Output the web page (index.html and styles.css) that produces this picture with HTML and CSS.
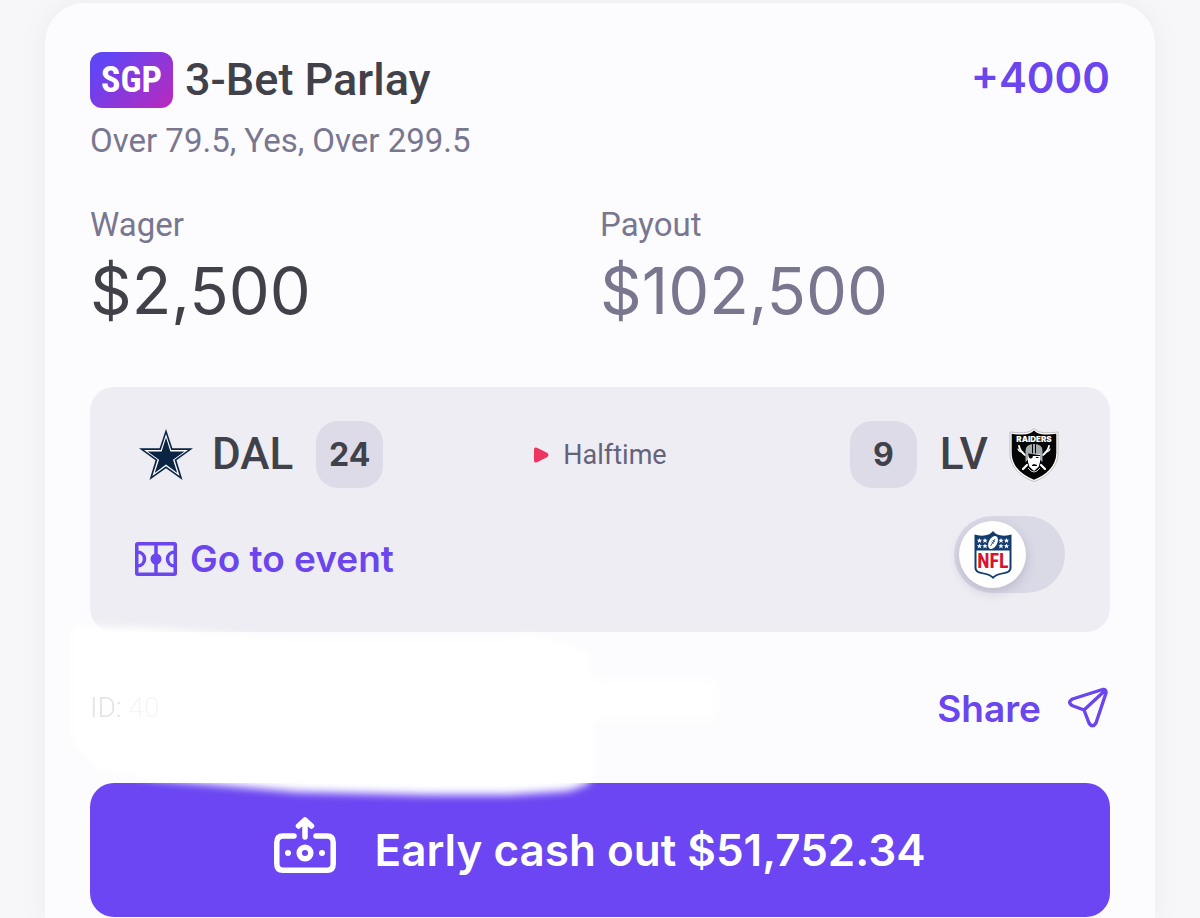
FILE: index.html
```html
<!DOCTYPE html>
<html lang="en">
<head>
  <meta charset="UTF-8">
  <meta name="viewport" content="width=device-width, initial-scale=1">
  <title>3-Bet Parlay</title>
  <link rel="stylesheet" href="styles.css">
</head>
<body>
  <main class="bet-card">
    <header class="bet-header">
      <span class="sgp">SGP</span>
      <h1>3-Bet Parlay</h1>
      <span class="odds">+4000</span>
    </header>
    <p class="picks">Over 79.5, Yes, Over 299.5</p>

    <dl class="amounts">
      <div>
        <dt>Wager</dt>
        <dd>$2,500</dd>
      </div>
      <div class="payout">
        <dt>Payout</dt>
        <dd>$102,500</dd>
      </div>
    </dl>

    <section class="game">
      <div class="match">
        <div class="team">
          <svg class="team-logo" viewBox="0 0 62 62" aria-hidden="true">
            <path fill="#0b2444" d="M31 5L37.4 24.3H58L41.5 36.3L47.5 56L31 44.2L14.5 56L20.5 36.3L4 24.3H24.6Z"/>
            <path fill="#fff" d="M31 10L36.2 26H53L39.5 35.8L44.6 52L31 42.2L17.4 52L22.5 35.8L9 26H25.8Z"/>
            <path fill="#0b2444" d="M31 13.500L35.400 27.500H49.500L38 35.700L42.300 49L31 40.600L19.700 49L24 35.700L12.500 27.500H26.600Z"/>
          </svg>
          <span class="team-name">DAL</span>
          <span class="score">24</span>
        </div>
        <div class="status">
          <svg class="live" viewBox="0 0 16 16" aria-hidden="true">
            <path fill="#ee3560" d="M1 2.5Q1 -.5 4 .8L14 5.8Q17 8 14 10.200L4 15.200Q1 16.500 1 13.500Z"/>
          </svg>
          <span>Halftime</span>
        </div>
        <div class="team away">
          <span class="score">9</span>
          <span class="team-name">LV</span>
          <svg class="team-logo" viewBox="0 0 62 62" aria-hidden="true">
            <path fill="#fff" stroke="#999" stroke-width=".6" d="M31 4.500Q34 8.500 41 8.800Q48 9 55 8V29C55 43 44 53 31 57.500C18 53 7 43 7 29V8Q14 9 21 8.800Q28 8.500 31 4.500Z"/>
            <path fill="#050505" d="M31 6.500Q35 10.300 42 10.500Q48 10.700 53.300 9.800V29C53.300 42 43 51.300 31 55.700C19 51.300 8.700 42 8.700 29V9.800Q14 10.700 20 10.500Q27 10.300 31 6.500Z"/>
            <text x="31" y="18.2" text-anchor="middle" class="raiders-text">RAIDERS</text>
            <g fill="none" stroke="#fff" stroke-width="1.8" stroke-linecap="round">
              <path d="M16 22Q17 27 22 31M46 22Q45 27 40 31"/>
              <path d="M15 25Q16 28 20 28M47 25Q46 28 42 28" stroke-width="1.2"/>
              <path d="M24 41L20 45M38 41L42 45" stroke-width="2.2"/>
            </g>
            <path fill="#a5acaf" d="M22.500 38V27Q22.500 20 31 20T39.500 27V38L37 36V30H25V36Z"/>
            <path fill="#050505" d="M29 20.300h1v9h-1zM32 20.300h1v9h-1z"/>
            <path fill="#fff" d="M25 30H37V38L35.500 43L31 47L26.500 43L25 38Z"/>
            <path fill="#050505" d="M25 29.500L37 31V32L30 32Q29.500 35 27.500 34.500T25.500 32ZM33 33h2.500v1H33zM29 41l2-1 3 1v1h-5z"/>
            <path fill="none" stroke="#ccc" d="M25 44Q31 52 37 44"/>
          </svg>
        </div>
      </div>

      <div class="game-actions">
        <a class="event-link" href="#event">
          <svg class="event-icon" viewBox="0 0 42 34" aria-hidden="true">
            <g fill="none" stroke="currentColor" stroke-width="3.5">
              <rect x="1.75" y="1.75" width="38.5" height="30.5" rx="1"/>
              <path d="M21 2V32M2 10C12 10 12 24 2 24M40 10C30 10 30 24 40 24"/>
            </g>
            <circle cx="21" cy="17" r="5.5" fill="currentColor"/>
          </svg>
          Go to event
        </a>
        <label class="league">
          <input type="checkbox" aria-label="NFL">
          <span class="knob">
            <svg class="nfl-logo" viewBox="0 0 40 50" aria-hidden="true">
              <path fill="#123c70" d="M20 1Q23 5 29 5.500Q34 6 38.500 4.500V38Q38.500 43 31 44Q23 45 20 49Q17 45 9 44Q1.500 43 1.500 38V4.500Q6 6 11 5.500Q17 5 20 1Z"/>
              <path fill="#fff" d="M3.500 20.500H36.500V38Q36.500 41.500 30 42.500Q23 43.500 20 46.500Q17 43.500 10 42.500Q3.500 41.500 3.500 38Z"/>
              <g fill="#fff">
                <path id="star" d="M6.500 8l.8 1.800h1.900l-1.500 1.200 .6 1.900-1.800-1.200-1.800 1.200 .6-1.900-1.500-1.200h1.900z"/>
                <use href="#star" x="5.5"/>
                <use href="#star" x="21.5"/>
                <use href="#star" x="27"/>
                <use href="#star" y="5.5"/>
                <use href="#star" x="5.5" y="5.5"/>
                <use href="#star" x="21.5" y="5.5"/>
                <use href="#star" x="27" y="5.5"/>
                <ellipse cx="20" cy="12.5" rx="4.200" ry="7" transform="rotate(28 20 12.5)"/>
              </g>
              <path d="M17.500 16L22 9M18.500 12l2.500 1.500M19.500 10.300l2.500 1.500" stroke="#123c70" stroke-width=".8"/>
              <text x="20" y="38" text-anchor="middle" class="nfl-text">NFL</text>
            </svg>
          </span>
        </label>
      </div>
    </section>

    <footer class="bet-footer">
      <!-- soft cover that hides the bet number -->
      <svg class="cover" viewBox="0 0 680 200" aria-hidden="true">
        <defs>
          <filter id="soft" x="-10%" y="-10%" width="120%" height="120%">
            <feGaussianBlur stdDeviation="4"/>
          </filter>
        </defs>
        <g fill="#fff" filter="url(#soft)">
          <path d="M14 14L90 16L230 28H450Q475 18 500 30L532 40L537 155L530 172L510 179L450 183H370L240 180L170 174L100 168L40 158L14 130Z"/>
          <rect x="530" y="65" width="132" height="45" rx="12" opacity=".8"/>
        </g>
      </svg>
      <span class="bet-id">ID: <span class="faded">40</span></span>
      <button type="button" class="share">
        Share
        <svg class="share-icon" viewBox="0 0 42 42" aria-hidden="true">
          <path fill="none" stroke="currentColor" stroke-width="3.4" stroke-linejoin="round" stroke-linecap="round" d="M34.500 2.500L4.500 12Q-1 15 4 18.500L16 23L21 36Q24.500 41.500 28 36L38 6Q38.500 2 34.500 2.500ZM16 23L36.500 4"/>
        </svg>
      </button>
    </footer>

    <button type="button" class="cash-out">
      <svg class="cash-icon" viewBox="0 0 62 56" aria-hidden="true">
        <g fill="none" stroke="currentColor" stroke-width="5.5" stroke-linecap="round" stroke-linejoin="round">
          <path d="M20 19H9Q2.800 19 2.800 25.500V47Q2.800 53.200 9 53.200H53Q59.200 53.200 59.200 47V25.500Q59.200 19 53 19H42"/>
          <path d="M31 20V4M24.500 9L31 3L37.500 9"/>
          <circle cx="31" cy="36" r="5.8"/>
        </g>
        <g fill="currentColor">
          <circle cx="14" cy="36" r="3"/>
          <circle cx="48" cy="36" r="3"/>
        </g>
      </svg>
      Early cash out $51,752.34
    </button>
  </main>
</body>
</html>
```
FILE: styles.css
```css
* {
  box-sizing: border-box;
}

body {
  margin: 0;
  padding: 3px 45px 0;
  background-color: #f7f7f9;
  color: #414149;
  font-family: Inter, Roboto, sans-serif;
  overflow: hidden;
}

h1, p, dl, dd {
  margin: 0;
}

button {
  border: none;
  background: none;
  padding: 0;
  font-family: inherit;
  cursor: pointer;
}

.bet-card {
  padding: 49px 45px 1px;
  background-color: #fcfcfe;
  border-radius: 40px 40px 0 0;
  box-shadow: 0 0 30px rgba(40, 40, 60, 0.05);
}

.bet-header {
  display: flex;
  align-items: center;
  gap: 12px;
  height: 56px;
}

.sgp {
  width: 83px;
  border-radius: 12px;
  background: linear-gradient(135deg, #6145f5 15%, #b62abf 95%);
  color: #fff;
  font: bold 36px/56px "Liberation Sans Narrow", "Roboto Condensed", Roboto, sans-serif;
  text-align: center;
}

h1 {
  font: 500 45px/56px Roboto, sans-serif;
}

.odds {
  margin-left: auto;
  padding-bottom: 6px;
  color: #6b46ee;
  font-size: 42px;
  font-weight: 600;
}

.picks {
  margin-top: 13px;
  color: #79778f;
  font: 33px/40px Roboto, sans-serif;
}

.amounts {
  display: grid;
  grid-template-columns: 1fr 1fr;
  margin-top: 44px;
}

.amounts dt {
  color: #79778f;
  font: 33px/40px Roboto, sans-serif;
}

.amounts dd {
  margin-top: 6px;
  font-size: 65px;
  line-height: 80px;
}

.payout dd {
  color: #79778f;
}

.game {
  margin-top: 56px;
  padding: 34px 45px 39px;
  border-radius: 24px;
  background-color: #eeedf3;
}

.match {
  display: grid;
  grid-template-columns: 1fr auto 1fr;
  align-items: center;
}

.team {
  display: flex;
  align-items: center;
  gap: 15px;
}

.away {
  justify-content: flex-end;
}

.team-logo {
  width: 62px;
  height: 62px;
}

.raiders-text {
  fill: #fff;
  font: 900 8px Inter, sans-serif;
}

.team-name {
  font: 500 44px/67px Roboto, sans-serif;
}

.score {
  width: 67px;
  margin: 0 8px;
  border-radius: 22px;
  background-color: #dcdbe7;
  font-size: 32px;
  font-weight: 700;
  line-height: 67px;
  text-align: center;
}

.status {
  display: flex;
  align-items: center;
  gap: 14px;
  color: #65637a;
  font: 27px/40px Roboto, sans-serif;
}

.live {
  width: 16px;
  height: 16px;
}

.game-actions {
  display: flex;
  align-items: center;
  justify-content: space-between;
  margin-top: 28px;
}

.event-link {
  display: flex;
  align-items: center;
  gap: 13px;
  padding-top: 8px;
  color: #6b46ee;
  font-size: 37px;
  font-weight: 600;
  text-decoration: none;
}

.event-icon {
  width: 42px;
  height: 34px;
}

.league {
  position: relative;
  display: flex;
  cursor: pointer;
}

.league input {
  appearance: none;
  width: 111px;
  height: 77px;
  margin: 0;
  border-radius: 39px;
  background-color: #dad9e6;
  cursor: pointer;
}

.knob {
  position: absolute;
  top: 5px;
  left: 5px;
  display: flex;
  align-items: center;
  justify-content: center;
  width: 67px;
  height: 67px;
  border-radius: 50%;
  background-color: #fff;
  box-shadow: 0 4px 12px rgba(60, 55, 100, 0.2);
}

.league input:checked + .knob {
  left: 39px;
}

.nfl-logo {
  width: 40px;
  height: 50px;
}

.nfl-text {
  fill: #d8142c;
  font: bold 20px "Liberation Sans Narrow", "Roboto Condensed", sans-serif;
}

.bet-footer {
  position: relative;
  display: flex;
  align-items: center;
  justify-content: space-between;
  height: 48px;
  margin: 52px 0 51px;
}

.bet-id {
  position: relative;
  color: #e2e2e8;
  font: 300 28px/40px Roboto, sans-serif;
}

.faded {
  color: #f6f6f8;
}

.cover {
  position: absolute;
  top: -72px;
  left: -32px;
  width: 680px;
  height: 200px;
  pointer-events: none;
}

.share {
  display: flex;
  align-items: center;
  gap: 27px;
  color: #6b46ee;
  font-size: 37px;
  font-weight: 600;
}

.share-icon {
  width: 42px;
  height: 42px;
}

.cash-out {
  display: flex;
  align-items: center;
  justify-content: center;
  gap: 38px;
  width: 100%;
  height: 134px;
  border-radius: 24px;
  background-color: #6b46f2;
  color: #fff;
  font-size: 44px;
  font-weight: 600;
}

.cash-icon {
  width: 62px;
  height: 56px;
  margin-bottom: 10px;
}
```
